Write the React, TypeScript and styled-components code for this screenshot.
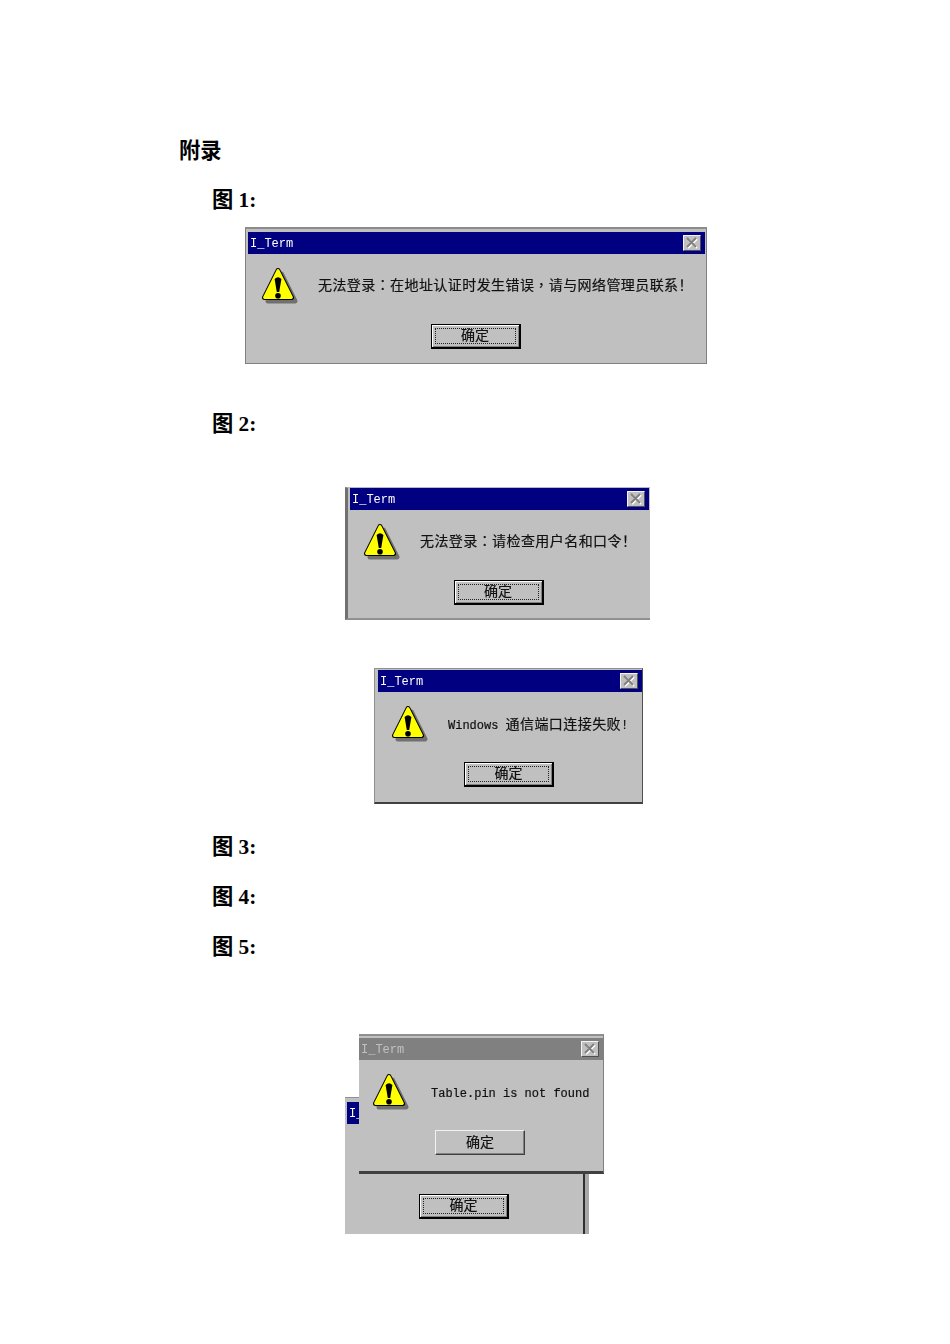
import React from 'react';
import styled, { createGlobalStyle, css } from 'styled-components';

const GlobalStyle = createGlobalStyle`
  html, body {
    margin: 0;
    padding: 0;
    background: #fff;
  }
`;

const Page = styled.div`
  box-sizing: border-box;
  width: 950px;
  height: 1344px;
  padding: 136px 0 0 179px;
  overflow: hidden;
  font-family: "Liberation Serif", "Noto Sans CJK SC", serif;
  color: #000;
`;

const Heading = styled.h1`
  margin: 0;
  height: 30px;
  line-height: 30px;
  font-size: 21.3px;
  font-weight: 700;
`;

const FigureLabel = styled.h2<{ $gap: number }>`
  margin: ${(p) => p.$gap}px 0 0 33px;
  height: 30px;
  line-height: 30px;
  font-size: 21.3px;
  font-weight: 700;
`;

type Frame = 'thin' | 'leftHeavy' | 'raised' | 'front' | 'behind';

const frames: Record<Frame, ReturnType<typeof css>> = {
  thin: css`
    border: 1px solid #808080;
    border-top: 2px solid #8c8c8c;
    padding: 3px 1px 0 2px;
  `,
  leftHeavy: css`
    border-left: 3px solid #707070;
    border-bottom: 2px solid #909090;
    border-top: 1px solid #b8b8c8;
    padding: 0 1px 0 2px;
  `,
  raised: css`
    border: 1px solid #909090;
    border-right: 1px solid #505050;
    border-bottom: 2px solid #404040;
    padding: 1px 0 0 3px;
  `,
  front: css`
    border-top: 2px solid #909090;
    border-right: 1px solid #808080;
    border-bottom: 3px solid #404040;
    padding: 2px 0 0 0;
  `,
  behind: css`
    border-top: 1px solid #909090;
    padding: 4px 2px 0 2px;
    background: #c0c0c0;
    border-right: 4px solid #a8a8a8;
    box-shadow: inset -2px 0 0 #303030;
  `,
};

const Dialog = styled.div<{ $left: number; $gap: number; $width: number; $height: number; $frame: Frame }>`
  box-sizing: border-box;
  width: ${(p) => p.$width}px;
  height: ${(p) => p.$height}px;
  margin: ${(p) => p.$gap}px 0 0 ${(p) => p.$left}px;
  background: #c0c0c0;
  overflow: hidden;
  filter: blur(0.5px);
  ${(p) => frames[p.$frame]}
`;

const FrontDialog = styled(Dialog)`
  position: absolute;
  top: 0;
  left: 180px;
  margin: 0;
  z-index: 1;
`;

const TitleBar = styled.div<{ $inactive?: boolean }>`
  display: flex;
  align-items: center;
  justify-content: space-between;
  box-sizing: border-box;
  height: 22px;
  padding: 0 4px 0 2px;
  background: ${(p) => (p.$inactive ? '#808080' : '#000080')};
  color: ${(p) => (p.$inactive ? '#c0c0c0' : '#fff')};
  font-family: "Liberation Mono", monospace;
  font-size: 12px;
`;

const TitleText = styled.span`
  padding-top: 2px;
`;

const CloseButton = styled.span`
  display: flex;
  align-items: center;
  justify-content: center;
  box-sizing: border-box;
  width: 18px;
  height: 16px;
  background: #c0c0c0;
  border: 1px solid;
  border-color: #f4f4f4 #505050 #505050 #f4f4f4;
`;

const Content = styled.div`
  display: flex;
  align-items: center;
  height: 40px;
  padding: 13px 0 0 12px;
  gap: 20px;
`;

const Message = styled.div<{ $lift: number; $indent: number }>`
  margin: 0 0 ${(p) => p.$lift}px ${(p) => p.$indent}px;
  white-space: nowrap;
  font-family: "Noto Sans CJK SC", sans-serif;
  font-size: 14px;
  letter-spacing: 0.42px;
  line-height: 18px;
  color: #111;
  -webkit-text-stroke: 0.2px #111;
`;

const Latin = styled.span`
  font-family: "Liberation Mono", monospace;
  font-size: 12px;
  letter-spacing: 0;
`;

const Punct = styled.span`
  font-family: "Noto Sans CJK TC", sans-serif;
`;

const ButtonRow = styled.div`
  display: flex;
  justify-content: center;
  margin-top: 17px;
  padding-right: 2px;
`;

const OkButton = styled.div<{ $focused?: boolean }>`
  box-sizing: border-box;
  width: 90px;
  height: 25px;
  padding: 3px;
  background: #c0c0c0;
  font-family: "Noto Sans CJK SC", sans-serif;
  font-size: 14px;
  color: #111;
  -webkit-text-stroke: 0.2px #111;
  ${(p) =>
    p.$focused
      ? css`
          border: 1px solid #000;
          border-right-width: 2px;
          border-bottom-width: 2px;
          box-shadow: inset 1px 1px 0 #fff, inset -1px -1px 0 #808080;
        `
      : css`
          border: 1px solid;
          border-color: #f2f2f2 #404040 #404040 #f2f2f2;
          box-shadow: inset -1px -1px 0 #808080;
        `}
`;

const ButtonLabel = styled.div<{ $focused?: boolean }>`
  display: flex;
  align-items: center;
  justify-content: center;
  box-sizing: border-box;
  height: 100%;
  padding-bottom: 4px;
  line-height: 14px;
  border: 1px dotted ${(p) => (p.$focused ? '#222' : 'transparent')};
`;

const Stack = styled.div`
  display: flow-root;
  position: relative;
  margin-top: 72px;
  height: 200px;
`;

const TRIANGLE = 'M18 3.5 L31.5 30.5 L4.5 30.5 Z';

const WarningIcon = () => (
  <svg width="38" height="40" viewBox="0 0 38 40" style={{ flex: 'none' }}>
    <path d={TRIANGLE} transform="translate(3.5 3.5)" fill="#707070" stroke="#707070" strokeWidth="5" strokeLinejoin="round" />
    <path d={TRIANGLE} fill="#000" stroke="#000" strokeWidth="5" strokeLinejoin="round" />
    <path d={TRIANGLE} fill="#ffff00" stroke="#ffff00" strokeWidth="2.8" strokeLinejoin="round" />
    <path d="M14.6 12 Q18 8.5 21.4 12 L19.2 25 L16.8 25 Z" fill="#000" />
    <circle cx="18" cy="28.8" r="2.8" fill="#000" />
  </svg>
);

const CloseIcon = () => (
  <svg width="14" height="12" viewBox="0 0 14 12">
    <path d="M3 2 L12 11 M12 2 L3 11" stroke="#fff" strokeWidth="2" />
    <path d="M2 1 L11 10 M11 1 L2 10" stroke="#808080" strokeWidth="2" />
  </svg>
);

type AlertBodyProps = {
  inactive?: boolean;
  focused?: boolean;
  lift?: number;
  indent?: number;
  children?: React.ReactNode;
};

const AlertBody: React.FC<AlertBodyProps> = ({ inactive, focused = true, lift = 6, indent = 0, children }) => (
  <>
    <TitleBar $inactive={inactive}>
      <TitleText>I_Term</TitleText>
      <CloseButton>
        <CloseIcon />
      </CloseButton>
    </TitleBar>
    <Content>
      <WarningIcon />
      <Message $lift={lift} $indent={indent}>{children}</Message>
    </Content>
    <ButtonRow>
      <OkButton $focused={focused}>
        <ButtonLabel $focused={focused}>确定</ButtonLabel>
      </OkButton>
    </ButtonRow>
  </>
);

const App: React.FC = () => (
  <Page>
    <GlobalStyle />
    <Heading>附录</Heading>

    <FigureLabel $gap={19}>图 1:</FigureLabel>
    <Dialog $left={66} $gap={12} $width={462} $height={137} $frame="thin">
      <AlertBody>
        无法登录<Punct>：</Punct>在地址认证时发生错误<Punct>，</Punct>请与网络管理员联系！
      </AlertBody>
    </Dialog>

    <FigureLabel $gap={45}>图 2:</FigureLabel>
    <Dialog $left={166} $gap={48} $width={305} $height={133} $frame="leftHeavy">
      <AlertBody>
        无法登录<Punct>：</Punct>请检查用户名和口令！
      </AlertBody>
    </Dialog>
    <Dialog $left={195} $gap={48} $width={269} $height={136} $frame="raised">
      <AlertBody lift={2}>
        <Latin>Windows </Latin>通信端口连接失败<Latin>!</Latin>
      </AlertBody>
    </Dialog>

    <FigureLabel $gap={28}>图 3:</FigureLabel>
    <FigureLabel $gap={20}>图 4:</FigureLabel>
    <FigureLabel $gap={20}>图 5:</FigureLabel>

    <Stack>
      <Dialog $left={166} $gap={63} $width={244} $height={137} $frame="behind">
        <AlertBody />
      </Dialog>
      <FrontDialog $left={0} $gap={0} $width={245} $height={140} $frame="front">
        <AlertBody inactive focused={false} lift={2} indent={2}>
          <Latin>Table.pin is not found</Latin>
        </AlertBody>
      </FrontDialog>
    </Stack>
  </Page>
);

export default App;
